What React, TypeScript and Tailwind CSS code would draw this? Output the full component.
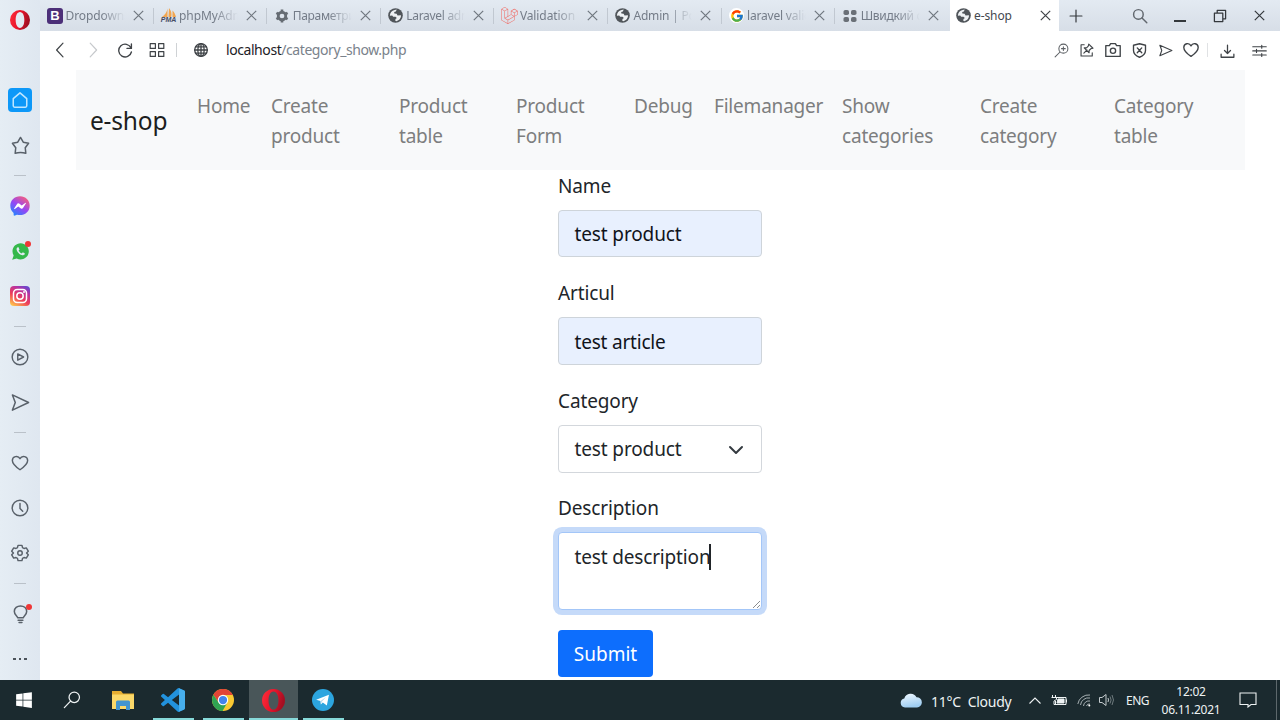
import type { ReactNode } from "react";
import { FaFacebookMessenger, FaLaravel, FaWindows } from "react-icons/fa";
import { FcGoogle } from "react-icons/fc";
import { IoLogoWhatsapp } from "react-icons/io";

function Line({ size = 20, w = 1.5, children, className = "" }: { size?: number; w?: number; children: ReactNode; className?: string }) {
  return (
    <svg width={size} height={size} viewBox="0 0 20 20" fill="none" stroke="currentColor" strokeWidth={w} strokeLinecap="round" strokeLinejoin="round" className={`shrink-0 ${className}`}>
      {children}
    </svg>
  );
}

function OperaLogo({ size, id }: { size: number; id: string }) {
  return (
    <svg width={size} height={size} viewBox="0 0 24 24" className="shrink-0">
      <defs>
        <linearGradient id={id} x1="0" y1="0" x2="1" y2="0.3">
          <stop offset="0" stopColor="#ff2f3b" />
          <stop offset="0.55" stopColor="#e8142b" />
          <stop offset="1" stopColor="#a30f22" />
        </linearGradient>
      </defs>
      <path fillRule="evenodd" fill={`url(#${id})`} d="M12 0a12 12 0 1 0 0 24a12 12 0 1 0 0-24M12 2.5c3.3 0 5.200 4.300 5.200 9.500s-1.900 9.500-5.200 9.500s-5.200-4.300-5.200-9.500s1.900-9.500 5.200-9.500" />
    </svg>
  );
}

function SiteGlobe() {
  return (
    <svg width="15" height="15" viewBox="0 0 16 16" className="shrink-0">
      <circle cx="8" cy="8" r="7.8" fill="#50555a" />
      <path d="M2 8.300C2 5 4 2.600 7 2.100L9.300 1.700L8.400 3.600L6.600 4.300L6.800 5.800L9.200 6.100L10.200 8L13.800 7.800C14.100 10.600 12 13.500 9 14L7.600 13.300L8.100 11.700L9.400 10.600L8 9.300L5.500 9.300L4.500 7.900Z" fill="#eef1f4" />
    </svg>
  );
}

function BootstrapMark() {
  return (
    <span className="flex h-4 w-4 shrink-0 items-center justify-center rounded-[3px] bg-[#4c2f78] font-['Liberation_Sans',sans-serif] text-[13px] font-bold leading-none text-white">B</span>
  );
}

function PmaMark() {
  return (
    <span className="flex w-4 shrink-0 flex-col items-center">
      <svg width="16" height="10" viewBox="0 0 16 10">
        <path d="M6.500 0.500V9H1C4 7 6 4 6.500 0.500ZM8 0C10.500 3 11 6 10.200 9H7.500ZM11.500 2.500C13.500 4.500 14.600 7 15 9H11.500Z" fill="#f2a650" />
      </svg>
      <span className="-mt-[2px] font-['Liberation_Sans',sans-serif] text-[7px] font-bold italic leading-[7px] text-[#454b63]">PMA</span>
    </span>
  );
}

function GearMark() {
  return (
    <svg width="14" height="14" viewBox="0 0 16 16" className="shrink-0" fill="none" stroke="#666c73">
      <circle cx="8" cy="8" r="4.300" strokeWidth="3.200" />
      <g strokeWidth="3">
        <path d="M8 .6v3M8 12.400v3M1.600 4.300l2.600 1.500M11.800 10.200l2.600 1.500M1.600 11.700l2.600-1.500M11.800 5.800l2.600-1.500" />
      </g>
    </svg>
  );
}

function DotsMark() {
  return (
    <svg width="14" height="14" viewBox="0 0 14 14" className="shrink-0" fill="#6a7077">
      <rect x="0.500" y="1" width="5.500" height="5" rx="1.800" />
      <rect x="8" y="1" width="5.500" height="5" rx="1.800" />
      <rect x="0.500" y="8" width="5.500" height="5" rx="1.800" />
      <rect x="8" y="8" width="5.500" height="5" rx="1.800" />
    </svg>
  );
}

function Cross({ className = "" }: { className?: string }) {
  return (
    <svg width="11" height="11" viewBox="0 0 11 11" className={`shrink-0 ${className}`} fill="none" stroke="currentColor" strokeWidth="1.200">
      <path d="M.8.8l9.400 9.400M10.200.8L.8 10.200" />
    </svg>
  );
}

const tabs: { title: string; icon: ReactNode; text: string }[] = [
  { title: "Dropdowns", icon: <BootstrapMark />, text: "tracking-[-0.1px]" },
  { title: "phpMyAdm", icon: <PmaMark />, text: "tracking-[-0.1px]" },
  { title: "Параметри", icon: <GearMark />, text: "tracking-[-0.3px]" },
  { title: "Laravel adm", icon: <SiteGlobe />, text: "tracking-[-0.3px]" },
  { title: "Validation", icon: <FaLaravel size={17} color="#f06a64" className="shrink-0" />, text: "tracking-[-0.1px]" },
  { title: "Admin | Pos", icon: <SiteGlobe />, text: "tracking-[-0.2px]" },
  {
    title: "laravel valid",
    icon: <span className="flex h-[15px] w-[15px] shrink-0 items-center justify-center rounded-full bg-white"><FcGoogle size={14} /></span>,
    text: "tracking-[-0.2px]",
  },
  { title: "Швидкий с", icon: <DotsMark />, text: "tracking-[-0.3px]" },
];

function TabBar() {
  return (
    <header className="flex h-[31px] bg-gradient-to-b from-[#e3eaf2] to-[#d7dee7]">
      <div className="flex w-[910px] shrink-0">
        {tabs.map((t, i) => (
          <div key={t.title} className="flex w-[113.600px] shrink-0 items-center pl-[6.500px]">
            <span className="flex w-[17px] shrink-0 justify-center">{t.icon}</span>
            <span className={`ml-[2px] w-[64px] shrink-0 whitespace-nowrap text-[12px] leading-[18px] text-[#747c88] [mask-image:linear-gradient(to_right,black_55%,transparent_92%)] ${t.text}`}>{t.title}</span>
            <Cross className="ml-[3px] text-[#70777f]" />
            {i < 7 && <span className="ml-auto h-4 w-px bg-[#c1c8d1]" />}
          </div>
        ))}
      </div>
      <div className="flex w-[109px] shrink-0 items-center bg-white pl-[6px] pr-[8px] text-[#43484e]">
        <SiteGlobe />
        <span className="ml-[3px] text-[12px] leading-[18px] tracking-[-0.1px]">e-shop</span>
        <Cross className="ml-auto text-[#3f4347]" />
      </div>
      <div className="flex flex-1 items-center pl-[10px] pr-[15px] text-[#34383c]">
        <Line size={14} w={1.7}><path d="M10 1.500v17M1.500 10h17" /></Line>
        <Line size={16} w={1.8} className="ml-[49px] text-[#60666d]"><circle cx="8" cy="8" r="6" /><path d="M12.500 12.500l6 6" /></Line>
        <span className="ml-[26px] mt-[11px] h-[1.500px] w-3 bg-[#34383c]" />
        <Line size={14} w={1.800} className="ml-[27px]"><path d="M2 6h12v12H2zM6 6V2h12v12h-4" /></Line>
        <Cross className="ml-auto" />
      </div>
    </header>
  );
}

function AddressBar() {
  return (
    <div className="flex h-[39px] items-center bg-white pb-px pl-[13px] pr-[13px] text-[#3f4347]">
      <Line size={16} w={1.5}><path d="M12.500 1.500L4.500 10l8 8.500" /></Line>
      <Line size={16} w={1.500} className="ml-4 text-[#c6c9cc]"><path d="M6.500 1.500l8 8.500l-8 8.500" /></Line>
      <Line size={16} w={1.700} className="ml-4"><path d="M17.500 7.500A8 8 0 1 0 18 12.500M18 2.500v5.500h-5.500" /></Line>
      <Line size={16} w={1.500} className="ml-4"><path d="M1.500 2h6.500v6h-6.500zM12 2h6.500v6H12zM1.500 12h6.500v6h-6.500zM12 12h6.500v6H12z" /></Line>
      <span className="ml-[11px] h-[14px] w-px bg-[#cfd2d5]" />
      <Line size={14} w={1.9} className="ml-[17px]"><circle cx="10" cy="10" r="9" /><ellipse cx="10" cy="10" rx="4.500" ry="9" /><path d="M10 1v18M1 10h18M2.500 5.500h15M2.500 14.500h15" /></Line>
      <span className="ml-[18px] text-[14px] leading-5 tracking-[-0.43px] text-[#1d2126]">localhost<span className="text-[#7a828b]">/category_show.php</span></span>
      <div className="ml-auto flex items-center">
        <Line size={15} w={1.400} className="text-[#5d6165]"><circle cx="12.500" cy="7.500" r="6" /><path d="M8 12l-6.500 6.500M12.500 5v5M10 7.500h5" /></Line>
        <Line size={14} w={1.600} className="ml-[11px]"><path d="M6 2.500H1.500v16h16V14M5.500 14.500l4.500-4.500M12.500 1.500l6 6l-3 .7l-2.500 2.500v3.300l-7-7h3.300l2.500-2.500z" /></Line>
        <Line size={16} w={1.700} className="ml-[11px]"><path d="M1 4.500h4.500L7 2h6l1.500 2.500H19V18H1z" /><circle cx="10" cy="11" r="3.300" /></Line>
        <Line size={15} w={1.800} className="ml-[11px]"><path d="M10 1l8 2v7c0 4-3 7-8 9c-5-2-8-5-8-9V3zM7 6.500l6 6.500M13 6.500L7 13" /></Line>
        <Line size={15} w={1.500} className="ml-[11px]"><path d="M2.500 3L18.500 10L2.500 17l2.500-7z" /></Line>
        <Line size={16} w={1.700} className="ml-[10px]"><path d="M10 18C5 14.500 1 11 1 6.800C1 1.500 7.800.5 10 4.800C12.200.5 19 1.500 19 6.800C19 11 15 14.500 10 18z" /></Line>
        <span className="ml-[8px] h-[14px] w-px bg-[#e0e2e4]" />
        <Line size={15} w={1.700} className="ml-[12px]"><path d="M10 3v11M6 10l4 4l4-4M1.500 15v4h17v-4" /></Line>
        <Line size={15} w={1.500} className="ml-[17px]"><path d="M1 5h18M1 10.500h18M1 16h18M13 3v4M6 8.500v4M13 14v4" /></Line>
      </div>
    </div>
  );
}

function SideItem({ children, dot }: { children: ReactNode; dot?: boolean }) {
  return (
    <div className="flex h-[45px] shrink-0 items-center justify-center">
      <span className="relative flex">
        {children}
        {dot && <span className="absolute -right-[2px] -top-[1px] h-[6px] w-[6px] rounded-full bg-[#ef3737]" />}
      </span>
    </div>
  );
}

function SideRule() {
  return (
    <div className="flex h-4 shrink-0 items-center justify-center">
      <span className="h-px w-3 bg-[#bac1c9]" />
    </div>
  );
}

function Sidebar() {
  return (
    <aside className="flex w-10 shrink-0 flex-col overflow-hidden bg-gradient-to-r from-[#e5edf4] to-[#dfe7f0] text-[#59616a]">
      <div className="flex h-[77.500px] shrink-0 justify-center pt-[10px]"><OperaLogo size={20} id="opera-menu" /></div>
      <SideItem>
        <span className="flex h-6 w-6 items-center justify-center rounded-[4px] bg-[#0d98f8] text-[#bfe6ff]">
          <Line size={18} w={1.700}><path d="M2.500 8.500L10 2l7.500 6.500V16.500q0 1.500-1.500 1.500H4q-1.500 0-1.500-1.500z" /></Line>
        </span>
      </SideItem>
      <SideItem><Line size={19} w={1.600}><path d="M10 1.500l2.900 5l5.600 1.200l-3.500 4.700l.6 5.800q-5.600-1.800-11.200 0l.6-5.800l-3.500-4.700l5.600-1.200z" /></Line></SideItem>
      <SideRule />
      <SideItem>
        <svg width="0" height="0" className="absolute">
          <linearGradient id="messenger" x1="0.1" y1="1" x2="0.8" y2="0">
            <stop offset="0" stopColor="#188cff" /><stop offset="0.5" stopColor="#9646f5" /><stop offset="1" stopColor="#fa6077" />
          </linearGradient>
        </svg>
        <span className="flex rounded-full bg-white bg-clip-content p-[3px]"><FaFacebookMessenger size={20} className="-m-[3px]" style={{ fill: "url(#messenger)" }} /></span>
      </SideItem>
      <SideItem dot><span className="flex h-[18px] w-[18px] items-center justify-center"><IoLogoWhatsapp size={19} color="#35b84b" className="shrink-0" /></span></SideItem>
      <SideItem>
        <svg width="20" height="20" viewBox="0 0 20 20">
          <defs>
            <linearGradient id="instagram" x1="0.2" y1="1" x2="0.8" y2="0">
              <stop offset="0" stopColor="#fdc04c" /><stop offset="0.4" stopColor="#ee3e59" /><stop offset="0.75" stopColor="#b833a1" /><stop offset="1" stopColor="#6648cf" />
            </linearGradient>
          </defs>
          <rect width="20" height="20" rx="4" fill="url(#instagram)" />
          <g fill="none" stroke="#fff" strokeWidth="1.500"><rect x="3.500" y="3.500" width="13" height="13" rx="3.700" /><circle cx="10" cy="10" r="3.200" /></g>
          <circle cx="14" cy="6" r="1" fill="#fff" />
        </svg>
      </SideItem>
      <SideRule />
      <SideItem><Line size={18} w={1.600}><circle cx="10" cy="10" r="8.700" /><path d="M7.500 6.500L14 10l-6.500 3.500z" /></Line></SideItem>
      <SideItem><Line size={19} w={1.600}><path d="M1.500 2L18.500 10L1.500 18l3-8z" /></Line></SideItem>
      <SideRule />
      <SideItem><Line size={18} w={1.600}><path d="M10 17.500C5 14 1.500 11 1.500 7.200C1.500 2.500 7.800 1 10 5.200C12.200 1 18.500 2.500 18.500 7.200C18.500 11 15 14 10 17.500z" /></Line></SideItem>
      <SideItem><Line size={18} w={1.600}><circle cx="10" cy="10" r="8.700" /><path d="M10 5v5.500l3 3" /></Line></SideItem>
      <SideItem>
        <Line size={18} w={1.600}>
          <path d="M7.800 1.500h4.400l.6 2.500l1.700 1l2.500-.7l2.200 3.700l-1.900 1.900l1.900 2.100l-2.200 3.700l-2.500-.7l-1.700 1l-.6 2.500H7.800L7.200 16l-1.700-1l-2.500.7L.8 12l1.900-2L.8 8L3 4.300l2.500.7l1.700-1z" />
          <circle cx="10" cy="10" r="2.500" />
        </Line>
      </SideItem>
      <SideRule />
      <SideItem dot><Line size={19} w={1.600}><path d="M7 13.500C7 11.500 3.500 10.500 3.500 6.800C3.500 3.200 6.500 1 10 1s6.500 2.200 6.500 5.800C16.500 10.500 13 11.500 13 13.500zM7.500 16h5M8.500 18.500h3" /></Line></SideItem>
      <SideItem>
        <span className="flex gap-[3px]">
          <i className="h-[2px] w-[2.500px] bg-[#4c535b]" /><i className="h-[2px] w-[2.500px] bg-[#4c535b]" /><i className="h-[2px] w-[2.500px] bg-[#4c535b]" />
        </span>
      </SideItem>
    </aside>
  );
}

const links: { lines: string[]; box: string }[] = [
  { lines: ["Home"], box: "w-[74px]" },
  { lines: ["Create", "product"], box: "w-[128px]" },
  { lines: ["Product", "table"], box: "w-[117px]" },
  { lines: ["Product", "Form"], box: "w-[118px]" },
  { lines: ["Debug"], box: "w-[80px]" },
  { lines: ["Filemanager"], box: "w-[128px]" },
  { lines: ["Show", "categories"], box: "w-[138px]" },
  { lines: ["Create", "category"], box: "w-[134px]" },
  { lines: ["Category", "table"], box: "w-[131px]" },
];

function Navbar() {
  return (
    <nav className="ml-9 mr-[35px] flex h-[99.500px] bg-[#f8f9fa] pl-[14px]">
      <a className="w-[97px] shrink-0 pt-[32px] text-[24.500px] leading-[38px] tracking-[-0.2px] text-[#1c1e20]">e-shop</a>
      <ul className="flex pt-[21px] text-[19px] leading-[30px] tracking-[-0.2px] text-[#7d7e7f]">
        {links.map((l) => (
          <li key={l.lines.join(" ")} className={`${l.box} shrink-0 whitespace-nowrap pl-[10px]`}>
            {l.lines.map((x) => <div key={x}>{x}</div>)}
          </li>
        ))}
      </ul>
    </nav>
  );
}

function Label({ children }: { children: ReactNode }) {
  return <label className="block h-[30px] text-[19px] leading-[30px] tracking-[-0.13px]">{children}</label>;
}

function ProductForm() {
  return (
    <form className="ml-[518px] flex w-[204px] flex-col pt-[1.500px] text-[#212529]">
      <Label>Name</Label>
      <div className="mt-[9px] flex h-[47px] items-center rounded-[4px] border border-[#ced4da] bg-[#e8f0fe] pl-[15.500px] pt-[2px] text-[19px] tracking-[-0.13px] text-[#10131a]">test product</div>
      <div className="mt-[20.500px]"><Label>Articul</Label></div>
      <div className="mt-[9.500px] flex h-[48px] items-center rounded-[4px] border border-[#ced4da] bg-[#e8f0fe] pl-[15.500px] pt-[2px] text-[19px] tracking-[-0.2px] text-[#10131a]">test article</div>
      <div className="mt-[20.500px]"><Label>Category</Label></div>
      <div className="mt-[9px] flex h-[48px] items-center justify-between rounded-[4px] border border-[#d3d7dc] bg-white pl-[15.500px] pr-[17px] pt-[2px] text-[19px] tracking-[-0.13px]">
        test product
        <svg width="16" height="16" viewBox="0 0 16 16" fill="none" stroke="#343a40" strokeWidth="2" strokeLinecap="round" strokeLinejoin="round"><path d="M2 5l6 6 6-6" /></svg>
      </div>
      <div className="mt-[20.500px]"><Label>Description</Label></div>
      <div className="relative mt-[9px] h-[78px] rounded-[4px] border border-[#a3c6f8] bg-white pl-[15.500px] pt-[9px] text-[19px] leading-[30px] tracking-[-0.16px] shadow-[0_0_0_5px_#c5daf9]">
        <span className="inline-flex items-center whitespace-nowrap">test description<i className="-ml-px h-[26px] w-[1.500px] shrink-0 bg-[#212529]" /></span>
        <svg width="9" height="9" viewBox="0 0 9 9" className="absolute bottom-0 right-0" stroke="#8a8d90" strokeWidth="1"><path d="M1 8L8 1M5 8l3-3" /></svg>
      </div>
      <button type="button" className="mt-5 h-[47px] w-[95px] rounded-[4px] bg-[#0d6efd] pt-px text-[19px] text-white">Submit</button>
    </form>
  );
}

function TaskButton({ children, open, active, box }: { children: ReactNode; open?: boolean; active?: boolean; box: string }) {
  return (
    <div className={`flex h-10 shrink-0 flex-col items-center ${box} ${active ? "bg-[#495659]" : ""}`}>
      <div className="flex h-[38px] items-center pt-[2px]">{children}</div>
      {open && <span className={`h-[2px] bg-[#87d9d9] ${active ? "w-full" : "w-[41px]"}`} />}
    </div>
  );
}

function Taskbar() {
  return (
    <footer className="flex h-10 bg-[#1b2a2f] text-[#eef2f3]">
      <TaskButton box="w-12"><FaWindows size={18} color="#fff" /></TaskButton>
      <TaskButton box="w-12"><Line size={18} w={1.400}><circle cx="12.500" cy="7" r="5.800" /><path d="M8.400 11.200L1.500 18.500" /></Line></TaskButton>
      <TaskButton box="w-[53px]">
        <svg width="22" height="19" viewBox="0 0 22 19">
          <path d="M0 0h9l2 2.500h11V18H0z" fill="#e6ad31" /><path d="M0 3.500h22V18H0z" fill="#fbd869" />
          <path d="M4 19v-8q0-1.500 1.500-1.500h11q1.500 0 1.500 1.500v8h-4v-4H8v4z" fill="#4295cf" />
        </svg>
      </TaskButton>
      <TaskButton box="w-12" open>
        <svg width="24" height="24" viewBox="0 0 24 24">
          <path fill="#2292dd" d="M23.15 2.587L18.21.21a1.494 1.494 0 0 0-1.705.29l-9.46 8.63-4.12-3.128a.999.999 0 0 0-1.276.057L.327 7.261A1 1 0 0 0 .326 8.74L3.899 12 .326 15.26a1 1 0 0 0 .001 1.479L1.65 17.94a.999.999 0 0 0 1.276.057l4.12-3.128 9.46 8.63a1.492 1.492 0 0 0 1.704.29l4.942-2.377A1.5 1.5 0 0 0 24 20.06V3.939a1.5 1.5 0 0 0-.85-1.352zm-5.146 14.861L10.826 12l7.178-5.448v10.896z" />
          <path fill="#47aeec" d="M18 .15L23.150 2.600Q24 3 24 4V20Q24 21 23.150 21.400L18 23.850z" />
        </svg>
      </TaskButton>
      <TaskButton box="w-[52px]" open>
        <svg width="22" height="22" viewBox="0 0 24 24">
          <circle cx="12" cy="12" r="12" fill="#f9c932" />
          <path d="M12 6.500H22.700A12 12 0 0 0 1.500 6.200L7.200 14.800z" fill="#e24436" />
          <path d="M1.500 6.200A12 12 0 0 0 11.500 24L16.800 14.700L7.200 14.800z" fill="#30a353" />
          <circle cx="12" cy="12" r="5.700" fill="#fff" /><circle cx="12" cy="12" r="4.500" fill="#4384ec" />
        </svg>
      </TaskButton>
      <TaskButton box="w-[49px]" open active><OperaLogo size={23} id="opera-task" /></TaskButton>
      <TaskButton box="w-[50px]" open>
        <svg width="22" height="22" viewBox="0 0 24 24">
          <circle cx="12" cy="12" r="12" fill="#2ca5df" />
          <path d="M4.500 11.800L18.500 6.200L16.200 18L11.800 14.700L9.700 16.800L9.300 13.200z" fill="#fff" /><path d="M9.300 13.200l6-4.400l-4.600 5.200l-1 2.800z" fill="#b9d9ea" />
        </svg>
      </TaskButton>
      <div className="ml-auto flex items-center">
        <svg width="22" height="16" viewBox="0 0 22 16">
          <defs><linearGradient id="cloud" x1="0" y1="0" x2="0.3" y2="1"><stop offset="0" stopColor="#f1f9ff" /><stop offset="1" stopColor="#9fcdf1" /></linearGradient></defs>
          <path d="M5 15.500A4.500 4.500 0 0 1 4.300 6.600A6.600 6.600 0 0 1 16.500 5.300A5.100 5.100 0 0 1 17 15.500z" fill="url(#cloud)" />
        </svg>
        <span className="ml-[9px] mt-[3px] w-[103px] whitespace-pre text-[14px] leading-5 tracking-[-0.25px]">11°C  Cloudy</span>
        <svg width="12" height="7" viewBox="0 0 12 7" fill="none" stroke="currentColor" strokeWidth="1.100" className="-ml-[5px]"><path d="M.5 6.500L6 1l5.500 5.500" /></svg>
        <svg width="17" height="12" viewBox="0 0 17 12" fill="none" stroke="currentColor" className="ml-[10px]"><path d="M5 3.500h10v7H4.500V7M15.500 5.500v3M1.500 1v3M4.500 1v3M.5 3.500h5v2L3 7M3 7v3.500h2" /><path d="M7 5h6v4H6z" fill="currentColor" /></svg>
        <svg width="14" height="14" viewBox="0 0 14 14" fill="none" stroke="#a7b0b3" className="ml-[9px]"><path d="M.8 11A11 11 0 0 1 13 2M3.500 12A8 8 0 0 1 13 5M6.500 13A5.500 5.500 0 0 1 13 8M9.500 13A3 3 0 0 1 13 11" /><circle cx="12.300" cy="12.500" r="1" fill="#fff" stroke="none" /></svg>
        <svg width="15" height="14" viewBox="0 0 15 14" fill="none" stroke="#c4cbce" className="ml-[8px]"><path d="M.5 4.500H3L7 1.500v11L3 9.500H.5z" /><path d="M9 5q1 2 0 4" /><path d="M11 3.500q2.200 3.500 0 7M13 2q3 5 0 10" opacity=".5" /></svg>
        <span className="ml-[12px] mt-[2px] w-[25px] text-[12px] tracking-[-0.5px]">ENG</span>
        <div className="ml-[9px] mt-px flex w-[62px] flex-col items-center text-[12px] leading-[18px] tracking-[-0.25px]"><span>12:02</span><span>06.11.2021</span></div>
        <svg width="18" height="16" viewBox="0 0 18 16" fill="none" stroke="currentColor" strokeWidth="1.100" className="ml-[17px]"><path d="M1 1h16v11.500h-5l-3 2.500v-2.500H1z" /></svg>
        <span className="ml-[19px] mr-[3px] h-10 w-px bg-[#5d686c]" />
      </div>
    </footer>
  );
}

export default function App() {
  return (
    <div className="flex h-[720px] w-[1280px] flex-col overflow-hidden bg-white font-['Noto_Sans','Open_Sans',sans-serif]">
      <div className="flex h-[680px]">
        <Sidebar />
        <div className="flex min-w-0 flex-1 flex-col">
          <TabBar />
          <AddressBar />
          <main className="flex-1 overflow-hidden bg-white">
            <Navbar />
            <ProductForm />
          </main>
        </div>
      </div>
      <Taskbar />
    </div>
  );
}
